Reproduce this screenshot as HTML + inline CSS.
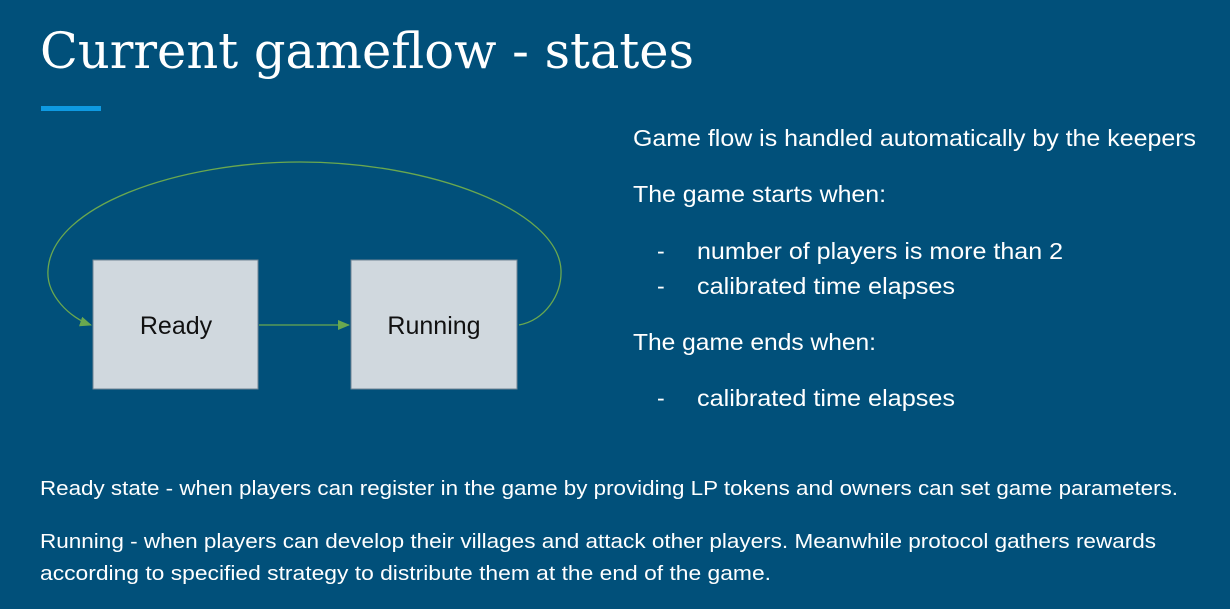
<!DOCTYPE html>
<html><head><meta charset="utf-8"><style>
html,body{margin:0;padding:0;background:#01507a;width:1230px;height:609px;overflow:hidden}
svg{display:block}
text{font-family:"Liberation Sans",sans-serif;fill:#fff}
</style></head><body>
<svg width="1230" height="609" viewBox="0 0 1230 609" xmlns="http://www.w3.org/2000/svg">
<rect width="1230" height="609" fill="#01507a"/>
<text x="40" y="68" style="font-family:'DejaVu Serif',serif" font-size="50" textLength="654" lengthAdjust="spacingAndGlyphs">Current gameflow - states</text>
<rect x="41" y="106" width="60" height="5" fill="#0e9ae2"/>
<defs><marker id="a" markerWidth="12" markerHeight="10" refX="11" refY="5" orient="auto" markerUnits="userSpaceOnUse"><path d="M0,0 L12,5 L0,10 z" fill="#6aa84f"/></marker></defs>
<rect x="93" y="260" width="165" height="129" fill="#d0d8de" stroke="#6f8494" stroke-width="1"/>
<rect x="351" y="260" width="166" height="129" fill="#d0d8de" stroke="#6f8494" stroke-width="1"/>
<text x="176" y="334" text-anchor="middle" font-size="25" style="fill:#111">Ready</text>
<text x="434" y="334" text-anchor="middle" font-size="25" style="fill:#111">Running</text>
<path d="M259,325 L349,325" stroke="#6aa84f" stroke-width="1.3" fill="none" marker-end="url(#a)"/>
<path d="M519,325 C545,320 562,295 561,270 C558,210 430,162 300,162 C180,162 52,205 48,270 C46,295 70,318 91,325" stroke="#6aa84f" stroke-width="1.3" fill="none" marker-end="url(#a)"/>
<g font-size="23">
<text x="633" y="146" textLength="563" lengthAdjust="spacingAndGlyphs">Game flow is handled automatically by the keepers</text>
<text x="633" y="202" textLength="253" lengthAdjust="spacingAndGlyphs">The game starts when:</text>
<text x="657" y="259">-</text>
<text x="697" y="259" textLength="366" lengthAdjust="spacingAndGlyphs">number of players is more than 2</text>
<text x="657" y="294">-</text>
<text x="697" y="294" textLength="258" lengthAdjust="spacingAndGlyphs">calibrated time elapses</text>
<text x="633" y="350" textLength="243" lengthAdjust="spacingAndGlyphs">The game ends when:</text>
<text x="657" y="406">-</text>
<text x="697" y="406" textLength="258" lengthAdjust="spacingAndGlyphs">calibrated time elapses</text>
</g>
<g font-size="20">
<text x="40" y="495" textLength="1138" lengthAdjust="spacingAndGlyphs">Ready state - when players can register in the game by providing LP tokens and owners can set game parameters.</text>
<text x="40" y="548" textLength="1116" lengthAdjust="spacingAndGlyphs">Running - when players can develop their villages and attack other players. Meanwhile protocol gathers rewards</text>
<text x="40" y="580" textLength="731" lengthAdjust="spacingAndGlyphs">according to specified strategy to distribute them at the end of the game.</text>
</g>
</svg>
</body></html>
